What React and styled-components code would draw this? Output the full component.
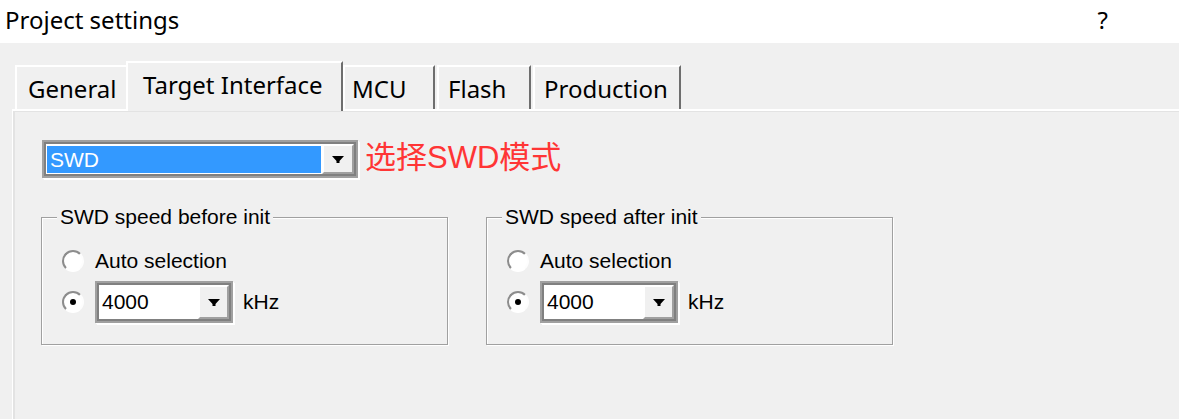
import React from 'react';
import styled, { createGlobalStyle } from 'styled-components';

const GlobalStyle = createGlobalStyle`
  html, body {
    margin: 0;
    padding: 0;
    background: #f0f0f0;
    overflow: hidden;
  }
`;

const Window = styled.div`
  width: 1179px;
  height: 419px;
  display: flex;
  flex-direction: column;
  background: #f0f0f0;
  overflow: hidden;
`;

const TitleBar = styled.div`
  height: 43px;
  flex-shrink: 0;
  box-sizing: border-box;
  background: #fff;
  display: flex;
  align-items: center;
  justify-content: space-between;
  padding: 0 71px 5px 5px;
  font-family: "Noto Sans", sans-serif;
  font-size: 24px;
  color: #000;
`;

const TabStrip = styled.div`
  height: 66px;
  flex-shrink: 0;
  display: flex;
  align-items: flex-end;
  padding-left: 15px;
`;

const Tab = styled.div`
  position: relative;
  z-index: ${({ active }) => (active ? 2 : 1)};
  box-sizing: border-box;
  width: ${({ w }) => w}px;
  height: ${({ active }) => (active ? 50 : 44)}px;
  margin-left: ${({ active }) => (active ? -2 : 0)}px;
  margin-right: ${({ gap }) => gap || 0}px;
  margin-bottom: ${({ active }) => (active ? -2 : 0)}px;
  padding-left: ${({ pad }) => pad}px;
  padding-bottom: ${({ active }) => (active ? 6 : 0)}px;
  border-top: 2px solid #fff;
  border-left: 2px solid #fff;
  border-right: 2px solid #6e6e6e;
  background: #f0f0f0;
  display: flex;
  align-items: center;
  font-family: "Noto Sans", sans-serif;
  font-size: 24px;
  color: #000;
  white-space: nowrap;
`;

const Panel = styled.div`
  flex: 1;
  margin-left: 12px;
  border-top: 2px solid #fff;
  border-left: 1px solid #fff;
  box-shadow: inset 2px 1px 0 #e3e3e3;
  padding: 29px 0 0 29px;
  display: flex;
  flex-direction: column;
`;

const ModeRow = styled.div`
  display: flex;
  align-items: center;
  height: 38px;
  gap: 7px;
`;

const Hint = styled.span`
  font-family: "Liberation Sans", "Noto Sans CJK SC", sans-serif;
  font-size: 31px;
  line-height: 1;
  color: #ff3535;
  padding-bottom: 4px;
`;

const ComboFrame = styled.div`
  box-sizing: border-box;
  width: ${({ w }) => w}px;
  height: ${({ h }) => h}px;
  border: 2px solid #a0a0a0;
  box-shadow: 1px 1px 0 #fff, 2px 2px 0 #fff;
  display: flex;
  flex-shrink: 0;
`;

const ComboInner = styled.div`
  flex: 1;
  display: flex;
  border: 2px solid #808080;
  background: #fff;
`;

const ComboField = styled.div`
  flex: 1;
  display: flex;
  padding: ${({ selected }) => (selected ? '2px 1px 1px 1px' : '0')};
`;

const ComboValue = styled.div`
  flex: 1;
  display: flex;
  align-items: center;
  padding-left: 3px;
  background: ${({ selected }) => (selected ? '#3399ff' : '#fff')};
  color: ${({ selected }) => (selected ? '#fff' : '#000')};
  font-family: "Liberation Sans", Arial, sans-serif;
  font-size: 21px;
`;

const DropButton = styled.div`
  box-sizing: border-box;
  width: ${({ w }) => w}px;
  background: #f0f0f0;
  border-top: 2px solid #fff;
  border-left: 2px solid #fff;
  border-right: 2px solid #a0a0a0;
  border-bottom: 2px solid #a0a0a0;
  display: flex;
  align-items: center;
  justify-content: center;
`;

const GroupRow = styled.div`
  display: flex;
  gap: 38px;
  margin-top: 27px;
  margin-left: -1px;
`;

const Group = styled.fieldset`
  box-sizing: border-box;
  width: 407px;
  margin: 0;
  padding: 0 0 21px 20px;
  border: 1px solid #a0a0a0;
  box-shadow: inset 1px 1px 0 #fff, 1px 1px 0 #fff;
  font-family: "Liberation Sans", Arial, sans-serif;
  font-size: 21px;
  color: #000;
`;

const Legend = styled.legend`
  margin-left: -5px;
  padding: 0 3px;
  background: #f0f0f0;
  line-height: 24px;
`;

const Options = styled.div`
  display: flex;
  flex-direction: column;
  gap: 8px;
  padding-top: 20px;
`;

const OptionRow = styled.div`
  display: flex;
  align-items: center;
  height: ${({ h }) => h}px;
`;

const Radio = styled.span`
  box-sizing: border-box;
  width: 22px;
  height: 22px;
  border-radius: 50%;
  border: 2px solid;
  border-color: #8c8c8c #fdfdfd #ffffff #8c8c8c;
  background: #fff;
  margin-right: 11px;
  flex-shrink: 0;
  display: flex;
  align-items: center;
  justify-content: center;
  &::after {
    content: '';
    display: ${({ checked }) => (checked ? 'block' : 'none')};
    width: 6px;
    height: 6px;
    border-radius: 50%;
    background: #000;
  }
`;

const Unit = styled.span`
  margin-left: 10px;
`;

const Arrow = () => (
  <svg width="12" height="7" viewBox="0 0 12 7">
    <path d="M0 0H12L7.5 5V7H4.5V5Z" fill="#000" />
  </svg>
);

const Combo = ({ w, h, value, selected, button }) => (
  <ComboFrame w={w} h={h}>
    <ComboInner>
      <ComboField selected={selected}>
        <ComboValue selected={selected}>{value}</ComboValue>
      </ComboField>
      <DropButton w={button}>
        <Arrow />
      </DropButton>
    </ComboInner>
  </ComboFrame>
);

const SpeedGroup = ({ title }) => (
  <Group>
    <Legend>{title}</Legend>
    <Options>
      <OptionRow h={24}>
        <Radio />
        Auto selection
      </OptionRow>
      <OptionRow h={42}>
        <Radio checked />
        <Combo w={138} h={42} value="4000" button={31} />
        <Unit>kHz</Unit>
      </OptionRow>
    </Options>
  </Group>
);

const tabs = [
  { label: 'General', w: 113, pad: 11 },
  { label: 'Target Interface', w: 217, pad: 15, active: true },
  { label: 'MCU', w: 92, pad: 7, gap: 2 },
  { label: 'Flash', w: 94, pad: 9, gap: 2 },
  { label: 'Production', w: 148, pad: 9 },
];

const App = () => {
  return (
    <>
      <GlobalStyle />
      <Window>
        <TitleBar>
          <span>Project settings</span>
          <span>?</span>
        </TitleBar>
        <TabStrip>
          {tabs.map((t) => (
            <Tab key={t.label} w={t.w} pad={t.pad} gap={t.gap} active={t.active}>
              {t.label}
            </Tab>
          ))}
        </TabStrip>
        <Panel>
          <ModeRow>
            <Combo w={316} h={38} value="SWD" selected button={32} />
            <Hint>选择SWD模式</Hint>
          </ModeRow>
          <GroupRow>
            <SpeedGroup title="SWD speed before init" />
            <SpeedGroup title="SWD speed after init" />
          </GroupRow>
        </Panel>
      </Window>
    </>
  );
};

export default App;
